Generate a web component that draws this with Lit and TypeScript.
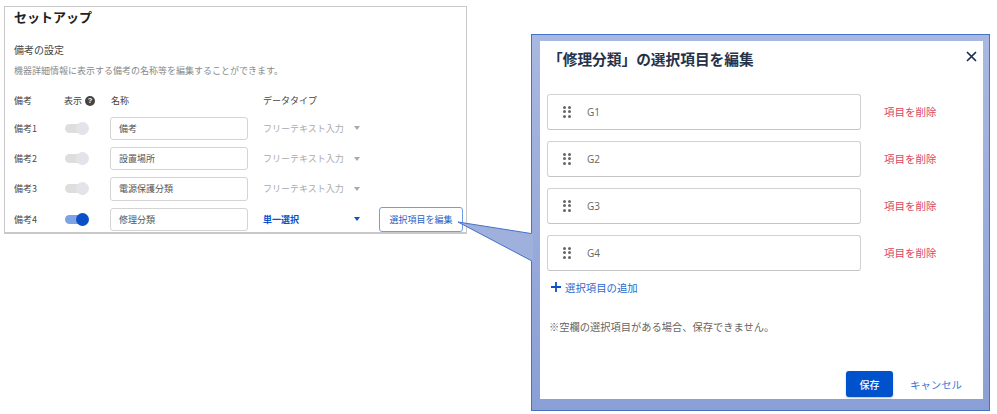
import { LitElement, html, css, svg } from "lit";
import { customElement } from "lit/decorators.js";

const rows = [
  { label: "備考1", name: "備考", type: "フリーテキスト入力", on: false },
  { label: "備考2", name: "設置場所", type: "フリーテキスト入力", on: false },
  { label: "備考3", name: "電源保護分類", type: "フリーテキスト入力", on: false },
  { label: "備考4", name: "修理分類", type: "単一選択", on: true },
];
const items = ["G1", "G2", "G3", "G4"];

@customElement("app-root")
export class AppRoot extends LitElement {
  static styles = css`
    :host {
      display: block;
      width: 997px;
      height: 414px;
      background: #fff;
      overflow: hidden;
      font-family: "Noto Sans CJK JP", "Noto Sans", sans-serif;
    }
    * { box-sizing: border-box; }
    .stage {
      position: relative;
      width: 997px;
      height: 414px;
      display: flex;
      align-items: flex-start;
      padding: 6px 0 0 4px;
    }
    .panel {
      width: 463px;
      height: 228px;
      border: 1px solid #c9c9c9;
      border-bottom-width: 2px;
      padding: 0 0 0 9px;
      overflow: hidden;
      flex: none;
    }
    .h1 { font-size: 13px; line-height: 20px; height: 20px; font-weight: 700; color: #222; }
    .h2 { font-size: 10px; line-height: 16px; margin-top: 15px; color: #444; }
    .desc { font-size: 9px; line-height: 14px; margin-top: 6px; color: #8a8a8a; white-space: nowrap; }
    .grid { display: flex; flex-direction: column; gap: 7px; margin-top: 15.5px; }
    .head { display: flex; align-items: center; height: 14px; font-size: 9px; color: #444; margin-bottom: 2px; }
    .row { display: flex; align-items: center; height: 23.4px; font-size: 9px; color: #4a4a4a; }
    .c1 { width: 50px; flex: none; }
    .c2 { width: 46px; flex: none; display: flex; align-items: center; gap: 3px; }
    .c3 { width: 153px; flex: none; }
    .head .c3 { padding-left: 1px; }
    .help {
      width: 10px; height: 10px; border-radius: 50%;
      background: #444; color: #fff; font-size: 7.5px; font-weight: 700;
      display: flex; align-items: center; justify-content: center; line-height: 1;
      font-family: "Liberation Sans", sans-serif;
    }
    .toggle { width: 25px; height: 13px; margin-left: 1px; display: flex; align-items: center; }
    .track { width: 20px; height: 9px; border-radius: 5px; background: #dedede; }
    .knob { width: 13px; height: 13px; border-radius: 50%; background: #e3e4ea; margin-left: -9px; flex: none; }
    .on .track { background: #7ba3e6; }
    .on .knob { background: #0a50c8; }
    .input {
      width: 138px; height: 23.4px; border: 1px solid #d4d4d4; border-radius: 3px;
      padding-left: 8px; display: flex; align-items: center; background: #fff; color: #555;
    }
    .select { width: 98px; flex: none; display: flex; align-items: center; justify-content: space-between; color: #aaa; }
    .select.active { color: #0a50c8; font-weight: 700; }
    .caret { width: 0; height: 0; border-left: 3px solid transparent; border-right: 3px solid transparent; border-top: 4px solid #aaa; margin-right: 1px; }
    .select.active .caret { border-top-color: #0a50c8; }
    .edit {
      margin-left: 18px; width: 84px; height: 25px; border: 1px solid #6f9ee8; border-radius: 3px;
      background: #fff; color: #2a62c4; font: inherit; font-size: 9px; padding: 0;
      display: flex; align-items: center; justify-content: center; white-space: nowrap; flex: none;
    }

    .dialog {
      flex: none;
      width: 459px;
      height: 377px;
      margin: 28px 0 0 64px;
      border: 1px solid #4472c4;
      background: linear-gradient(#a9b8e0, #8a9fd6);
      padding: 6px 6px 11px 8px;
    }
    .body {
      width: 443px; height: 358px; background: #fff;
      display: flex; flex-direction: column;
      padding: 0 6px 0 7px;
    }
    .dhead { display: flex; justify-content: space-between; align-items: center; height: 34px; padding: 0 0 0 2px; }
    .title { font-size: 14.7px; font-weight: 700; color: #26324a; white-space: nowrap; margin-top: 0; margin-left: -1px; }
    .close { width: 11px; height: 11px; display: block; margin-top: -3px; }
    .items { display: flex; flex-direction: column; gap: 11.5px; margin-top: 19px; }
    .item { display: flex; align-items: center; }
    .field {
      width: 314px; height: 35.5px; border: 1px solid #d2d2d2; border-bottom-color: #c4c4c4; border-radius: 3px;
      display: flex; align-items: center; padding-left: 15px; gap: 16px; color: #666; font-size: 10px;
      font-family: "Open Sans", sans-serif;
    }
    .dots { display: grid; grid-template-columns: 3px 3px; gap: 1.5px 2px; }
    .dots i { width: 3px; height: 3px; border-radius: 50%; background: #666; display: block; }
    .remove { margin-left: 23px; font-size: 10.5px; color: #d9475f; white-space: nowrap; }
    .add { display: flex; align-items: center; gap: 4px; margin: 9px 0 0 4px; height: 15px; color: #2a6ad0; font-size: 10.4px; white-space: nowrap; }
    .add svg { width: 10px; height: 10px; display: block; flex: none; }
    .note { margin: 24px 0 0 2px; font-size: 10.25px; line-height: 15px; color: #666; white-space: nowrap; }
    .foot { margin-top: auto; display: flex; align-items: center; padding: 0 12px 2px 299px; }
    .save {
      width: 47px; height: 26px; border: 0; border-radius: 3px; background: #0052cc; color: #fff;
      font: inherit; font-size: 10px; font-weight: 500; padding: 0; box-shadow: 0 1px 2px rgba(0,0,0,.25);
    }
    .cancel { margin-left: 17px; color: #3b78d8; font-size: 10.4px; white-space: nowrap; }
    .callout { position: absolute; left: 0; top: 0; width: 997px; height: 414px; pointer-events: none; }
  `;

  render() {
    return html`
      <div class="stage">
        <section class="panel">
          <div class="h1">セットアップ</div>
          <div class="h2">備考の設定</div>
          <div class="desc">機器詳細情報に表示する備考の名称等を編集することができます。</div>
          <div class="grid">
            <div class="head">
              <div class="c1">備考</div>
              <div class="c2">表示<span class="help">?</span></div>
              <div class="c3">名称</div>
              <div>データタイプ</div>
            </div>
            ${rows.map(
              (r) => html`
                <div class="row">
                  <div class="c1">${r.label}</div>
                  <div class="c2">
                    <div class="toggle ${r.on ? "on" : ""}"><div class="track"></div><div class="knob"></div></div>
                  </div>
                  <div class="c3"><div class="input">${r.name}</div></div>
                  <div class="select ${r.on ? "active" : ""}"><span>${r.type}</span><span class="caret"></span></div>
                  ${r.on ? html`<button class="edit">選択項目を編集</button>` : ""}
                </div>
              `
            )}
          </div>
        </section>

        <section class="dialog">
          <div class="body">
            <div class="dhead">
              <div class="title">「修理分類」の選択項目を編集</div>
              <svg class="close" viewBox="0 0 11 11"><path d="M1 1L10 10M10 1L1 10" stroke="#1f2d4d" stroke-width="1.7" fill="none"/></svg>
            </div>
            <div class="items">
              ${items.map(
                (i) => html`
                  <div class="item">
                    <div class="field">
                      <div class="dots"><i></i><i></i><i></i><i></i><i></i><i></i></div>
                      <span>${i}</span>
                    </div>
                    <div class="remove">項目を削除</div>
                  </div>
                `
              )}
            </div>
            <div class="add">
              <svg viewBox="0 0 10 10"><path d="M5 0V10M0 5H10" stroke="#0a50c8" stroke-width="1.8" fill="none"/></svg>
              選択項目の追加
            </div>
            <div class="note">※空欄の選択項目がある場合、保存できません。</div>
            <div class="foot">
              <button class="save">保存</button>
              <span class="cancel">キャンセル</span>
            </div>
          </div>
        </section>

        <svg class="callout" viewBox="0 0 997 414">
          ${svg`<polygon points="458,222 531,233.5 533,233.5 533,260.5 531,260.5" fill="#9fb0dd"/>
          <polyline points="531,233.5 458,222 531,260.5" fill="none" stroke="#4472c4" stroke-width="1"/>`}
        </svg>
      </div>
    `;
  }
}
